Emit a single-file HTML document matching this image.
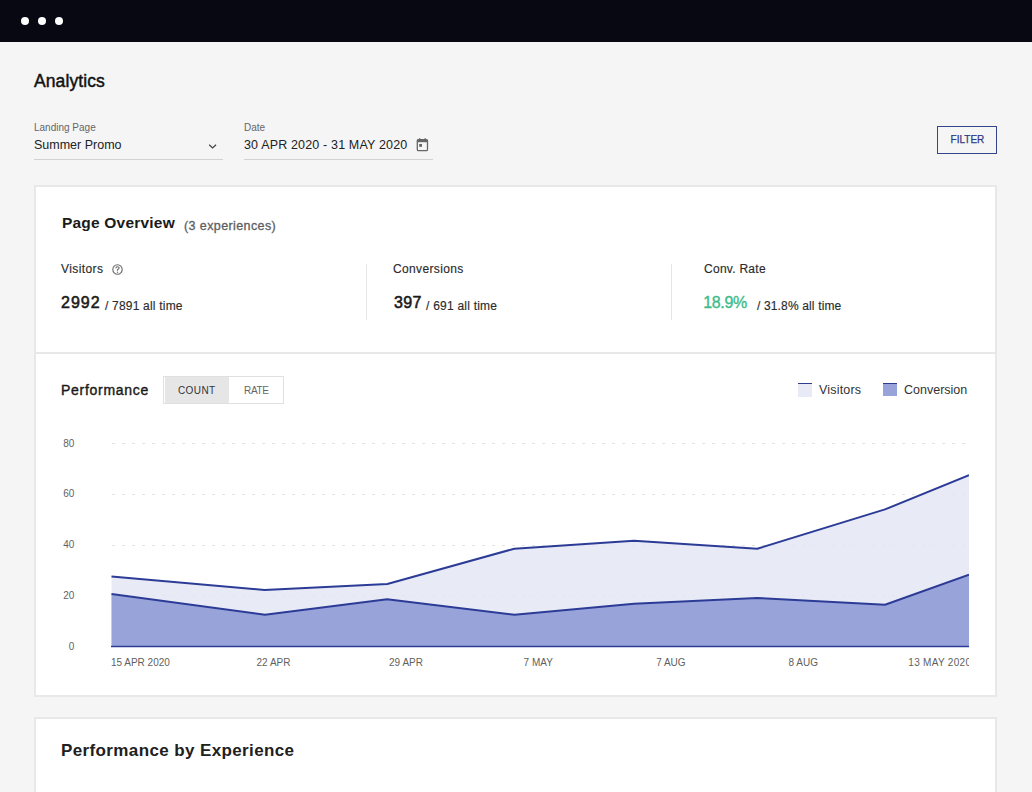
<!DOCTYPE html>
<html><head><meta charset="utf-8">
<style>
*{margin:0;padding:0;box-sizing:border-box}
html,body{width:1032px;height:792px;overflow:hidden;background:#f5f5f5;font-family:"Liberation Sans",sans-serif;color:#222}
.a{position:absolute;white-space:nowrap;line-height:1}
.topbar{position:absolute;left:0;top:0;width:1032px;height:42px;background:#070812}
.dot{position:absolute;top:17.3px;width:8px;height:8px;border-radius:50%;background:#fff}
.card{position:absolute;left:33.5px;width:963.5px;background:#fff;border:2px solid #e8e8e8}
</style></head><body>
<div class="topbar">
  <div class="dot" style="left:21px"></div>
  <div class="dot" style="left:38px"></div>
  <div class="dot" style="left:54.7px"></div>
</div>

<div class="a" style="left:34px;top:73.2px;font-size:17.5px;color:#111;letter-spacing:0.1px;-webkit-text-stroke:0.45px #111">Analytics</div>

<div class="a" style="left:34px;top:122.9px;font-size:10px;color:#666">Landing Page</div>
<div class="a" style="left:34px;top:138.5px;font-size:12.5px;color:#222">Summer Promo</div>
<svg class="a" style="left:208px;top:142.5px" width="10" height="7" viewBox="0 0 10 7"><path d="M1.2 1.7 L4.6 5 L8 1.7" fill="none" stroke="#444" stroke-width="1.25"/></svg>
<div class="a" style="left:34px;top:158.6px;width:189px;height:1.4px;background:#d2d2d2"></div>

<div class="a" style="left:244px;top:122.9px;font-size:10px;color:#666">Date</div>
<div class="a" style="left:244px;top:138.5px;font-size:12.5px;color:#222;letter-spacing:0.16px">30 APR 2020 - 31 MAY 2020</div>
<svg class="a" style="left:416px;top:138px" width="13" height="14" viewBox="0 0 13 14"><rect x="1.3" y="1.6" width="10.2" height="11" rx="1.2" fill="none" stroke="#666" stroke-width="1.3"/><rect x="1.3" y="1.6" width="10.2" height="2.6" fill="#666"/><rect x="3" y="0.2" width="1.3" height="2.4" fill="#666"/><rect x="8.5" y="0.2" width="1.3" height="2.4" fill="#666"/><rect x="3.2" y="6" width="2.8" height="2.8" fill="#666"/></svg>
<div class="a" style="left:244px;top:158.6px;width:189px;height:1.4px;background:#d2d2d2"></div>

<div class="a" style="left:937px;top:126px;width:60px;height:28px;border:1px solid #36458c"></div>
<div class="a" style="left:950.6px;top:135px;font-size:10px;color:#2c3a86;letter-spacing:0px;-webkit-text-stroke:0.25px #2c3a86">FILTER</div>

<!-- card 1 -->
<div class="card" style="top:185px;height:169px"></div>
<div class="a" style="left:62px;top:214.5px;font-size:15.5px;font-weight:bold;color:#1a1a1a;letter-spacing:0.2px">Page Overview</div>
<div class="a" style="left:184px;top:219.8px;font-size:12.5px;color:#5e5e5e;letter-spacing:0.4px;-webkit-text-stroke:0.3px #5e5e5e">(3 experiences)</div>

<div class="a" style="left:61px;top:263px;font-size:12px;color:#2b2b2b;-webkit-text-stroke:0.15px #2b2b2b;letter-spacing:0.4px">Visitors</div>
<svg class="a" style="left:111.5px;top:263.5px" width="11" height="11" viewBox="0 0 11 11"><circle cx="5.5" cy="5.5" r="4.7" fill="none" stroke="#6a6a6a" stroke-width="1.1"/><path d="M3.9 4.3 Q3.9 2.7 5.5 2.7 Q7.1 2.7 7.1 4.1 Q7.1 5 5.5 5.6 L5.5 6.7" fill="none" stroke="#6a6a6a" stroke-width="1.1"/><circle cx="5.5" cy="8.3" r="0.7" fill="#6a6a6a"/></svg>
<div class="a" style="left:61px;top:294.5px;font-size:16px;color:#1a1a1a;letter-spacing:1.0px;-webkit-text-stroke:0.55px #1a1a1a">2992</div>
<div class="a" style="left:105px;top:300px;font-size:12px;color:#2b2b2b;-webkit-text-stroke:0.15px #2b2b2b;letter-spacing:0.2px">/ 7891 all time</div>

<div class="a" style="left:366px;top:264px;width:1px;height:56px;background:#e6e6e6"></div>
<div class="a" style="left:393px;top:263px;font-size:12px;color:#2b2b2b;-webkit-text-stroke:0.15px #2b2b2b;letter-spacing:0.35px">Conversions</div>
<div class="a" style="left:394px;top:294.5px;font-size:16px;color:#1a1a1a;letter-spacing:0.3px;-webkit-text-stroke:0.55px #1a1a1a">397</div>
<div class="a" style="left:426px;top:300px;font-size:12px;color:#2b2b2b;-webkit-text-stroke:0.15px #2b2b2b;letter-spacing:0.23px">/ 691 all time</div>

<div class="a" style="left:671px;top:264px;width:1px;height:56px;background:#e6e6e6"></div>
<div class="a" style="left:704px;top:263px;font-size:12px;color:#2b2b2b;-webkit-text-stroke:0.15px #2b2b2b;letter-spacing:0.27px">Conv. Rate</div>
<div class="a" style="left:703.2px;top:294.5px;font-size:16px;color:#3dbb8a;letter-spacing:-0.35px;-webkit-text-stroke:0.35px #3dbb8a">18.9%</div>
<div class="a" style="left:757px;top:300px;font-size:12px;color:#2b2b2b;-webkit-text-stroke:0.15px #2b2b2b;letter-spacing:0.15px">/ 31.8% all time</div>

<!-- card 2 -->
<div class="card" style="top:352px;height:345px"></div>
<div class="a" style="left:61px;top:382.6px;font-size:14px;color:#1a1a1a;letter-spacing:0.72px;-webkit-text-stroke:0.4px #1a1a1a">Performance</div>
<div class="a" style="left:163px;top:375.5px;width:120.5px;height:28.5px;border:1.5px solid #e0e0e0;background:#fff"></div>
<div class="a" style="left:164.5px;top:377px;width:64.5px;height:25.5px;background:#e6e6e6"></div>
<div class="a" style="left:178px;top:385.5px;font-size:10px;color:#333;letter-spacing:0.4px">COUNT</div>
<div class="a" style="left:244px;top:385.5px;font-size:10px;color:#666;letter-spacing:-0.3px">RATE</div>

<div class="a" style="left:797.8px;top:382.9px;width:13.8px;height:13.7px;background:#e8eaf6;border-top:1.6px solid #2f3d8e"></div>
<div class="a" style="left:819px;top:384px;font-size:12.5px;color:#333;letter-spacing:0.18px">Visitors</div>
<div class="a" style="left:883.2px;top:382.9px;width:13.7px;height:13.5px;background:#98a3da;border-top:1.6px solid #2f3d8e"></div>
<div class="a" style="left:904px;top:384px;font-size:12.5px;color:#333">Conversion</div>

<!-- chart -->
<svg class="a" style="left:0;top:0" width="969" height="792" viewBox="0 0 969 792">
  <g stroke="#e3e3e3" stroke-width="1" stroke-dasharray="3 7">
    <line x1="112" y1="443.5" x2="969" y2="443.5"/>
    <line x1="112" y1="494.5" x2="969" y2="494.5"/>
    <line x1="112" y1="545.5" x2="969" y2="545.5"/>
    <line x1="112" y1="595.5" x2="969" y2="595.5"/>
  </g>
  <polygon points="111.5,576.5 264.5,589.9 387.3,584 514.3,548.7 634,540.7 757.2,548.8 885,509.4 969,475.1 969,646.5 111.5,646.5" fill="#e2e5f4" fill-opacity="0.8"/>
  <polygon points="111.5,593.9 265,614.7 387.1,599.2 514.5,614.7 634,603.7 757,598 885,604.8 969,574.8 969,646.5 111.5,646.5" fill="#98a3da"/>
  <polyline points="111.5,576.5 264.5,589.9 387.3,584 514.3,548.7 634,540.7 757.2,548.8 885,509.4 969,475.1" fill="none" stroke="#2c3c96" stroke-width="2" stroke-linejoin="round"/>
  <polyline points="111.5,593.9 265,614.7 387.1,599.2 514.5,614.7 634,603.7 757,598 885,604.8 969,574.8" fill="none" stroke="#2c3c96" stroke-width="2" stroke-linejoin="round"/>
  <line x1="111" y1="646.5" x2="969" y2="646.5" stroke="#2c3c96" stroke-width="1.5"/>
  <g font-family="Liberation Sans" font-size="10" fill="#5f5f5f">
    <text x="74.3" y="446.6" text-anchor="end">80</text>
    <text x="74.3" y="497.3" text-anchor="end">60</text>
    <text x="74.3" y="548.1" text-anchor="end">40</text>
    <text x="74.3" y="598.8" text-anchor="end">20</text>
    <text x="74.3" y="649.5" text-anchor="end">0</text>
  </g>
  <g font-family="Liberation Sans" font-size="10" fill="#5f5f5f" text-anchor="middle">
    <text x="140.4" y="665.5">15 APR 2020</text>
    <text x="273.5" y="665.5">22 APR</text>
    <text x="406" y="665.5">29 APR</text>
    <text x="538.2" y="665.5">7 MAY</text>
    <text x="670.9" y="665.5">7 AUG</text>
    <text x="803.3" y="665.5">8 AUG</text>
    <text x="908.3" y="665.5" text-anchor="start" letter-spacing="0.3">13 MAY 2020</text>
  </g>
</svg>

<!-- card 3 -->
<div class="card" style="top:717px;height:100px"></div>
<div class="a" style="left:61px;top:741.5px;font-size:17px;font-weight:bold;color:#202020;letter-spacing:0.38px">Performance by Experience</div>
</body></html>
